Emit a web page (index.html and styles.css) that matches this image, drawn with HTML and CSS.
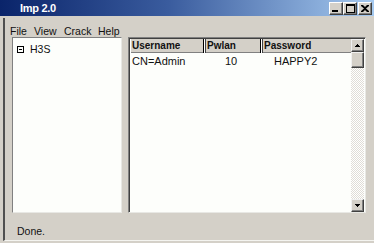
FILE: index.html
```html
<!DOCTYPE html>
<html>
<head>
<meta charset="utf-8">
<link rel="stylesheet" href="styles.css">
</head>
<body>
<div class="titlebar">
  <span class="title">Imp 2.0</span>
  <div class="caps">
    <span class="cap"><svg width="8" height="7" viewBox="0 0 8 7"><rect x="0" y="5" width="6" height="2" fill="#000"/></svg></span>
    <span class="cap"><svg width="9" height="9" viewBox="0 0 9 9"><rect x="0.5" y="0.5" width="8" height="8" fill="none" stroke="#000"/><rect x="0" y="0" width="9" height="2" fill="#000"/></svg></span>
    <span class="cap close"><svg width="8" height="7" viewBox="0 0 8 7"><path d="M0 0h2l2 2 2-2h2v1L5 3.5 8 6v1H6L4 5 2 7H0V6l3-2.5L0 1z" fill="#000"/></svg></span>
  </div>
</div>
<div class="client">
  <div class="menubar">
    <span>File</span><span>View</span><span>Crack</span><span>Help</span>
  </div>
  <div class="panes">
    <div class="tree">
      <div class="node"><span class="box"></span>H3S</div>
    </div>
    <div class="list">
      <div class="listmain">
        <div class="header">
          <div class="hcell c1">Username</div>
          <div class="hcell c2">Pwlan</div>
          <div class="hcell c3">Password</div>
        </div>
        <div class="row">
          <div class="c1 cell">CN=Admin</div>
          <div class="c2 cell num">10</div>
          <div class="c3 cell pw">HAPPY2</div>
        </div>
      </div>
      <div class="vscroll">
        <div class="sbtn"><svg width="5" height="3" viewBox="0 0 5 3"><path d="M2 0h1v1h1v1h1v1H0V2h1V1h1z" fill="#000"/></svg></div>
        <div class="thumb"></div>
        <div class="track"></div>
        <div class="sbtn"><svg width="5" height="3" viewBox="0 0 5 3"><path d="M0 0h5v1H4v1H3v1H2V2H1V1H0z" fill="#000"/></svg></div>
      </div>
    </div>
  </div>
  <div class="status">Done.</div>
</div>
</body>
</html>
```
FILE: styles.css
```css
html, body {
  margin: 0;
  padding: 0;
}
body {
  width: 374px;
  height: 243px;
  overflow: hidden;
  background: #d4d0c8;
  font-family: "Liberation Sans", Arial, sans-serif;
  font-size: 11px;
  color: #111;
}
.titlebar {
  height: 16px;
  background: linear-gradient(to right, #0a246a 0%, #3a5c9e 45%, #a6caf0 100%);
  display: flex;
  align-items: center;
  justify-content: space-between;
}
.title {
  color: #fff;
  font-weight: bold;
  font-size: 11px;
  padding-left: 20px;
  letter-spacing: -0.3px;
}
.caps {
  display: flex;
  margin-right: 2px;
  margin-top: 1px;
}
.cap {
  width: 14px;
  height: 13px;
  box-sizing: border-box;
  background: #d4d0c8;
  border-top: 1px solid #fff;
  border-left: 1px solid #fff;
  border-right: 1px solid #404040;
  border-bottom: 1px solid #404040;
  box-shadow: inset -1px -1px 0 #808080;
  display: flex;
  align-items: center;
  justify-content: center;
}
.cap.close {
  margin-left: 1px;
}
.client {
  margin-left: 3px;
  margin-top: 2px;
  height: 222px;
  border-left: 2px solid #505050;
  border-bottom: 1px solid #f4f4f0;
  display: flex;
  flex-direction: column;
}
.menubar {
  height: 19px;
  display: grid;
  grid-template-columns: 24px 30px 34px auto;
  padding-left: 5px;
  align-items: end;
  font-size: 10.5px;
  line-height: 12px;
}
.panes {
  display: flex;
  height: 176px;
  margin-left: 7px;
}
.tree {
  width: 110px;
  box-sizing: border-box;
  background: #fdfefb;
  border-top: 1px solid #808080;
  border-left: 1px solid #808080;
  border-right: 1px solid #e8e8e4;
  border-bottom: 1px solid #e8e8e4;
  padding: 5px 0 0 4px;
}
.node {
  display: flex;
  align-items: center;
  gap: 6px;
  font-size: 10.5px;
}
.box {
  width: 5px;
  height: 5px;
  border: 1px solid #000;
  position: relative;
}
.box::after {
  content: "";
  position: absolute;
  left: 1px;
  top: 2px;
  width: 3px;
  height: 1px;
  background: #000;
}
.list {
  width: 238px;
  margin-left: 6px;
  box-sizing: border-box;
  background: #fdfefb;
  border-top: 1px solid #808080;
  border-left: 1px solid #808080;
  border-right: 1px solid #e8e8e4;
  border-bottom: 1px solid #e8e8e4;
  box-shadow: inset 1px 1px 0 #404040;
  display: flex;
  padding: 1px 0 0 1px;
}
.listmain {
  flex: 1;
}
.header {
  display: flex;
  height: 14px;
  background: #d4d0c8;
  font-weight: bold;
  font-size: 10px;
  line-height: 13px;
}
.hcell {
  box-sizing: border-box;
  border-left: 1px solid #000;
  box-shadow: inset 1px 0 0 #fff, inset 2px 0 0 #404040, inset 0 -1px 0 #808080;
  padding-left: 3px;
}
.hcell.c1 {
  border-left: none;
  box-shadow: inset 1px 0 0 #fff, inset 0 -1px 0 #808080;
  padding-left: 2px;
}
.c1 { width: 73px; }
.c2 { width: 57px; }
.c3 { width: 91px; }
.row {
  display: flex;
  height: 16px;
  line-height: 17px;
}
.cell {
  box-sizing: border-box;
  padding-left: 2px;
}
.num {
  padding-left: 22px;
}
.pw {
  padding-left: 14px;
}
.vscroll {
  width: 13px;
  margin-right: 1px;
  display: flex;
  flex-direction: column;
}
.sbtn, .thumb {
  box-sizing: border-box;
  background: #d4d0c8;
  border-top: 1px solid #f0f0f0;
  border-left: 1px solid #f0f0f0;
  border-right: 1px solid #404040;
  border-bottom: 1px solid #404040;
  box-shadow: inset -1px -1px 0 #808080;
}
.sbtn {
  height: 13px;
  display: flex;
  align-items: center;
  justify-content: center;
}
.thumb {
  height: 16px;
}
.track {
  flex: 1;
  background-color: #eeeeea;
  background-image: repeating-conic-gradient(#e0ddd6 0% 25%, #ffffff 0% 50%);
  background-size: 2px 2px;
}
.status {
  padding-left: 12px;
  padding-top: 12px;
  font-size: 10.5px;
}
```
